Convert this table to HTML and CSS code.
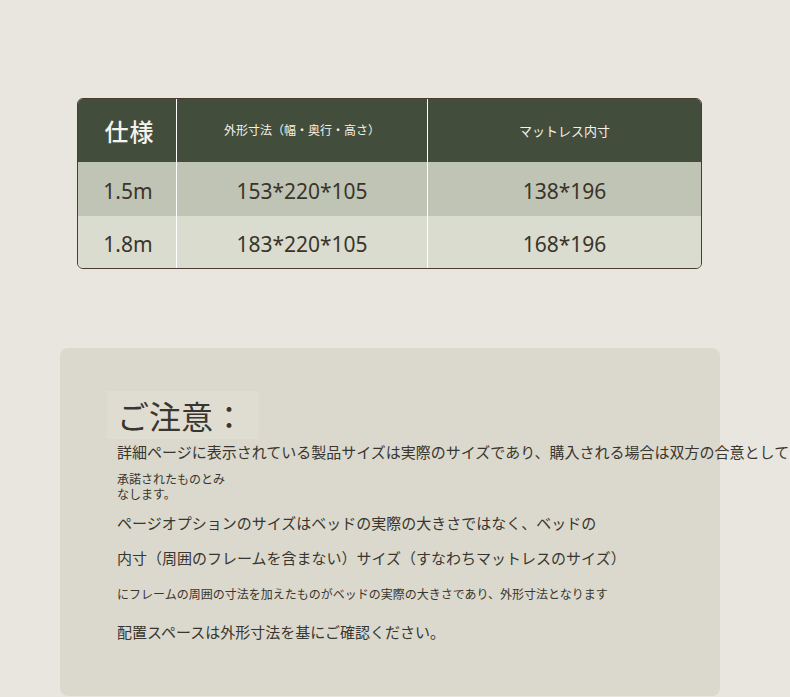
FILE: index.html
```html
<!DOCTYPE html>
<html lang="ja">
<head>
<meta charset="utf-8">
<link rel="stylesheet" href="styles.css">
</head>
<body>
<div class="page">
  <div class="spec">
    <div class="row head">
      <div class="cell c1"><span class="h-big">仕様</span></div>
      <div class="cell c2"><span class="h-sm">外形寸法（幅・奥行・高さ）</span></div>
      <div class="cell c3"><span class="h-md">マットレス内寸</span></div>
    </div>
    <div class="row r1">
      <div class="cell c1 num">1.5m</div>
      <div class="cell c2 num">153*220*105</div>
      <div class="cell c3 num">138*196</div>
    </div>
    <div class="row r2">
      <div class="cell c1 num">1.8m</div>
      <div class="cell c2 num">183*220*105</div>
      <div class="cell c3 num">168*196</div>
    </div>
  </div>

  <div class="notes">
    <h2 class="title">ご注意：</h2>
    <p class="t15 l1">詳細ページに表示されている製品サイズは実際のサイズであり、購入される場合は双方の合意として</p>
    <p class="t12 l2">承諾されたものとみ<br>なします。</p>
    <p class="t15 l3">ページオプションのサイズはベッドの実際の大きさではなく、ベッドの</p>
    <p class="t15 l4">内寸（周囲のフレームを含まない）サイズ（すなわちマットレスのサイズ）</p>
    <p class="t12 l5">にフレームの周囲の寸法を加えたものがベッドの実際の大きさであり、外形寸法となります</p>
    <p class="t15 l6">配置スペースは外形寸法を基にご確認ください。</p>
  </div>
</div>
</body>
</html>
```

FILE: styles.css
```css
html, body {
  margin: 0;
  padding: 0;
  background: #e9e6df;
  width: 790px;
  height: 697px;
  overflow: hidden;
  font-family: "Noto Sans CJK JP", "Noto Sans", sans-serif;
}

.page {
  padding-top: 98px;
}

.spec {
  margin-left: 77px;
  width: 625px;
  box-sizing: border-box;
  border: 1px solid #4a3d30;
  border-radius: 6px;
  overflow: hidden;
}

.row {
  display: grid;
  grid-template-columns: 98px 251px 274px;
}

.cell {
  display: flex;
  align-items: center;
  justify-content: center;
  box-sizing: border-box;
}

.c2, .c3 {
  border-left: 1px solid #ffffff;
}

.head {
  height: 63px;
  background: #434d3b;
  color: #f4f2ec;
}

.h-big {
  font-size: 24px;
  font-weight: 500;
  letter-spacing: 1px;
  padding-top: 0;
  margin-left: 5px;
}

.h-sm {
  font-size: 12px;
  padding-bottom: 2px;
}

.h-md {
  font-size: 13px;
  padding-top: 0;
}

.r1 {
  height: 54px;
  background: #c0c4b5;
}

.r2 {
  height: 52px;
  background: #dadccf;
}

.num {
  font-family: "Noto Sans", sans-serif;
  font-size: 21px;
  color: #3a342b;
  padding-top: 4px;
}

.r1 .c1, .r2 .c1 { padding-left: 2px; }

.notes {
  margin: 79px 0 0 60px;
  width: 660px;
  height: 348px;
  background: #dbd9cd;
  border-radius: 8px;
  box-sizing: border-box;
  padding: 43px 0 0 57px;
  color: #38362f;
}

.title {
  display: inline-block;
  margin: 0 0 0 -10px;
  padding: 2px 14px 2px 10px;
  font-size: 32px;
  font-weight: 400;
  line-height: 44px;
  background: #dfddd2;
}

.notes p {
  margin: 0;
  white-space: nowrap;
}

.t15 {
  font-size: 15px;
  line-height: 22px;
}

.t12 {
  font-size: 12px;
  line-height: 15px;
}

.l1 { margin-top: 2px !important; }
.l2 { margin-top: 8px !important; }
.l3 { margin-top: 11px !important; }
.l4 { margin-top: 13px !important; }
.l5 { margin-top: 17px !important; }
.l6 { margin-top: 20px !important; }
```
